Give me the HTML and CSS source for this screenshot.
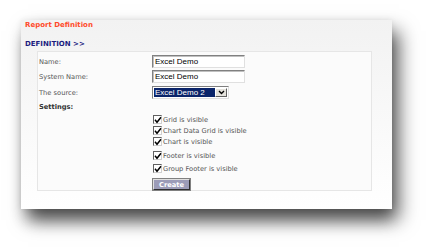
FILE: index.html
```html
<!DOCTYPE html>
<html lang="en">
<head>
  <meta charset="UTF-8">
  <title>Report Definition</title>
  <link rel="stylesheet" href="styles.css">
</head>
<body>

  <div class="paper">
    <h2 class="title">Report Definition</h2>
    <h3 class="section">DEFINITION &gt;&gt;</h3>

    <div class="form-box">
      <div class="row r-name">
        <label>Name:</label>
        <input type="text" class="txt" value="Excel Demo">
      </div>
      <div class="row r-sys">
        <label>System Name:</label>
        <input type="text" class="txt" value="Excel Demo">
      </div>
      <div class="row r-src">
        <label>The source:</label>
        <div class="combo">
          <span class="combo-val">Excel Demo 2</span>
          <span class="combo-btn">
            <svg width="7" height="5" viewBox="0 0 7 5"><path d="M1 1 L3.5 3.5 L6 1" fill="none" stroke="#000" stroke-width="1.4"/></svg>
          </span>
        </div>
      </div>
      <div class="row r-set">
        <label class="bold">Settings:</label>
      </div>

      <!-- Checkboxes -->
      <div class="chk c1"><span class="box"><svg width="8" height="8" viewBox="0 0 8 8"><path d="M1 3.8 L3 6.2 L7 1.2" fill="none" stroke="#000" stroke-width="1.5"/></svg></span>Grid is visible</div>
      <div class="chk c2"><span class="box"><svg width="8" height="8" viewBox="0 0 8 8"><path d="M1 3.8 L3 6.2 L7 1.2" fill="none" stroke="#000" stroke-width="1.5"/></svg></span>Chart Data Grid is visible</div>
      <div class="chk c3"><span class="box"><svg width="8" height="8" viewBox="0 0 8 8"><path d="M1 3.8 L3 6.2 L7 1.2" fill="none" stroke="#000" stroke-width="1.5"/></svg></span>Chart is visible</div>
      <div class="chk c4"><span class="box"><svg width="8" height="8" viewBox="0 0 8 8"><path d="M1 3.8 L3 6.2 L7 1.2" fill="none" stroke="#000" stroke-width="1.5"/></svg></span>Footer is visible</div>
      <div class="chk c5"><span class="box"><svg width="8" height="8" viewBox="0 0 8 8"><path d="M1 3.8 L3 6.2 L7 1.2" fill="none" stroke="#000" stroke-width="1.5"/></svg></span>Group Footer is visible</div>

      <button type="button" class="create-btn">Create</button>
    </div>
  </div>

</body>
</html>
```

FILE: styles.css
```css
body {
  margin: 0;
  min-height: 252px;
  box-sizing: border-box;
  padding: 20px 0 0 21px;
  background: white;
  font-family: "DejaVu Sans", Verdana, sans-serif;
}

.paper {
  width: 371px;
  height: 189px;
  box-sizing: border-box;
  padding: 1px 20px 0 16px;
  background: linear-gradient(#f2f2f2, #ffffff);
  box-shadow: 7px 11px 18px rgba(0,0,0,0.6), 2px 14px 14px -4px rgba(0,0,0,0.3), 0 0 6px rgba(0,0,0,0.07);
}

.title {
  margin: 0 0 0 -12px;
  font-size: 7px;
  line-height: 9px;
  color: #ff4a2a;
}

.section {
  margin: 10px 0 0 -12px;
  font-size: 7px;
  line-height: 9px;
  color: #1c1c80;
}

.form-box {
  margin-top: 2px;
  height: 140px;
  box-sizing: border-box;
  border: 1px solid #e6e6e6;
  background: #fbfbfb;
  padding: 3px 0 0 1px;
}

.row {
  display: flex;
  align-items: center;
  height: 13px;
  margin-bottom: 2px;
}

.row label {
  width: 113px;
  font-size: 6.7px;
  color: #555;
}

.row label.bold {
  font-weight: bold;
  color: #333;
}

.r-sys { margin-bottom: 3px; }
.r-set { height: 12px; margin-bottom: 0; }

.txt {
  width: 93px;
  height: 13px;
  box-sizing: border-box;
  margin: 0;
  padding: 0 2px;
  font-family: "Liberation Sans", Arial, sans-serif;
  font-size: 8px;
  color: #000;
  background: white;
  border: 1px solid;
  border-color: #808080 #e0e0e0 #e0e0e0 #808080;
  box-shadow: inset 1px 1px 0 #c0c0c0;
}

.combo {
  display: flex;
  width: 77px;
  height: 13px;
  box-sizing: border-box;
  border: 1px solid;
  border-color: #808080 #e0e0e0 #e0e0e0 #808080;
  background: white;
  padding: 1px;
}

.combo-val {
  flex: 1;
  background: #0a246a;
  color: white;
  font-family: "Liberation Sans", Arial, sans-serif;
  font-size: 8px;
  line-height: 9px;
  padding-left: 1px;
}

.combo-btn {
  width: 12px;
  display: flex;
  align-items: center;
  justify-content: center;
  background: #e4e2dc;
  border: 1px solid;
  border-color: #fff #606060 #606060 #fff;
  box-sizing: border-box;
}

.chk {
  display: flex;
  align-items: center;
  height: 11px;
  margin-left: 114px;
  font-size: 6.7px;
  color: #555;
}

.box {
  width: 9px;
  height: 9px;
  box-sizing: border-box;
  margin-right: 1px;
  background: white;
  border: 1px solid;
  border-color: #606060 #d0d0d0 #d0d0d0 #606060;
  display: flex;
  align-items: center;
  justify-content: center;
}

.box svg {
  flex: none;
}

.c1 { margin-top: 1px; }
.c4 { margin-top: 3px; }
.c5 { margin-top: 2px; }

.create-btn {
  display: block;
  margin: 5px 0 0 114px;
  width: 37px;
  height: 11px;
  padding: 0;
  font-family: "DejaVu Sans", Verdana, sans-serif;
  font-size: 6.7px;
  font-weight: bold;
  color: white;
  background: #9c9cb8;
  border: 1px solid;
  border-color: #e0e0e0 #303030 #303030 #e0e0e0;
  box-shadow: 0 0 0 1px #808080;
  cursor: pointer;
}
```
